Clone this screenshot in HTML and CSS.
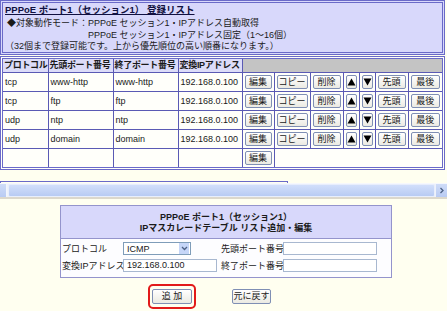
FILE: index.html
```html
<!DOCTYPE html>
<html lang="ja">
<head>
    <meta charset="UTF-8">
    <title>IPマスカレードテーブル</title>
    <link rel="stylesheet" href="styles.css">
</head>
<body>

    <!-- 上フレーム: 登録リスト -->
    <div class="top-frame">
        <div class="info-box">
            <div class="info-title">PPPoE ポート1（セッション1） 登録リスト</div>
            <div class="info-mode">
                <span class="mode-lbl">◆対象動作モード：</span>
                <span>PPPoE セッション1・IPアドレス自動取得</span>
                <span></span>
                <span>PPPoE セッション1・IPアドレス固定（1〜16個）</span>
            </div>
            <div class="info-note">（32個まで登録可能です。上から優先順位の高い順番になります。）</div>
        </div>

        <div class="table-wrap">
            <table class="list-table">
                <colgroup>
                    <col class="w-proto"><col class="w-port"><col class="w-port"><col class="w-ip">
                    <col class="w-edit"><col class="w-copy"><col class="w-del">
                    <col class="w-arrow"><col class="w-arrow"><col class="w-top"><col class="w-last">
                </colgroup>
                <thead>
                    <tr>
                        <th>プロトコル</th>
                        <th>先頭ポート番号</th>
                        <th>終了ポート番号</th>
                        <th>変換IPアドレス</th>
                        <th class="blank" colspan="7"></th>
                    </tr>
                </thead>
                <tbody>
                    <tr>
                        <td>tcp</td><td>www-http</td><td>www-http</td><td>192.168.0.100</td>
                        <td class="b"><button class="btn">編集</button></td>
                        <td class="b"><button class="btn">コピー</button></td>
                        <td class="b"><button class="btn">削除</button></td>
                        <td class="b"><button class="btn arrow"><svg width="9" height="8" viewBox="0 0 9 8"><path d="M4.5 0.5 L8.5 7.5 L0.5 7.5 Z"/></svg></button></td>
                        <td class="b"><button class="btn arrow"><svg width="9" height="8" viewBox="0 0 9 8"><path d="M0.5 0.5 L8.5 0.5 L4.5 7.5 Z"/></svg></button></td>
                        <td class="b"><button class="btn">先頭</button></td>
                        <td class="b"><button class="btn">最後</button></td>
                    </tr>
                    <tr>
                        <td>tcp</td><td>ftp</td><td>ftp</td><td>192.168.0.100</td>
                        <td class="b"><button class="btn">編集</button></td>
                        <td class="b"><button class="btn">コピー</button></td>
                        <td class="b"><button class="btn">削除</button></td>
                        <td class="b"><button class="btn arrow"><svg width="9" height="8" viewBox="0 0 9 8"><path d="M4.5 0.5 L8.5 7.5 L0.5 7.5 Z"/></svg></button></td>
                        <td class="b"><button class="btn arrow"><svg width="9" height="8" viewBox="0 0 9 8"><path d="M0.5 0.5 L8.5 0.5 L4.5 7.5 Z"/></svg></button></td>
                        <td class="b"><button class="btn">先頭</button></td>
                        <td class="b"><button class="btn">最後</button></td>
                    </tr>
                    <tr>
                        <td>udp</td><td>ntp</td><td>ntp</td><td>192.168.0.100</td>
                        <td class="b"><button class="btn">編集</button></td>
                        <td class="b"><button class="btn">コピー</button></td>
                        <td class="b"><button class="btn">削除</button></td>
                        <td class="b"><button class="btn arrow"><svg width="9" height="8" viewBox="0 0 9 8"><path d="M4.5 0.5 L8.5 7.5 L0.5 7.5 Z"/></svg></button></td>
                        <td class="b"><button class="btn arrow"><svg width="9" height="8" viewBox="0 0 9 8"><path d="M0.5 0.5 L8.5 0.5 L4.5 7.5 Z"/></svg></button></td>
                        <td class="b"><button class="btn">先頭</button></td>
                        <td class="b"><button class="btn">最後</button></td>
                    </tr>
                    <tr>
                        <td>udp</td><td>domain</td><td>domain</td><td>192.168.0.100</td>
                        <td class="b"><button class="btn">編集</button></td>
                        <td class="b"><button class="btn">コピー</button></td>
                        <td class="b"><button class="btn">削除</button></td>
                        <td class="b"><button class="btn arrow"><svg width="9" height="8" viewBox="0 0 9 8"><path d="M4.5 0.5 L8.5 7.5 L0.5 7.5 Z"/></svg></button></td>
                        <td class="b"><button class="btn arrow"><svg width="9" height="8" viewBox="0 0 9 8"><path d="M0.5 0.5 L8.5 0.5 L4.5 7.5 Z"/></svg></button></td>
                        <td class="b"><button class="btn">先頭</button></td>
                        <td class="b"><button class="btn">最後</button></td>
                    </tr>
                    <tr>
                        <td></td><td></td><td></td><td></td>
                        <td class="b"><button class="btn">編集</button></td>
                        <td colspan="6"></td>
                    </tr>
                </tbody>
            </table>
        </div>

        <div class="next-box"></div>
    </div>

    <!-- 横スクロールバー -->
    <div class="hscroll">
        <div class="hs-left"></div>
        <div class="hs-thumb"></div>
        <div class="hs-right">
            <svg width="6" height="7" viewBox="0 0 6 7"><path d="M1.5 1 L4 3.5 L1.5 6" fill="none" stroke="#4d6185" stroke-width="1.3"/></svg>
        </div>
    </div>
    <div class="frame-edge"></div>

    <!-- 下フレーム: 追加・編集 -->
    <div class="bottom-frame">
        <div class="edit-box">
            <div class="edit-head">
                PPPoE ポート1（セッション1）<br>
                IPマスカレードテーブル リスト追加・編集
            </div>
            <div class="edit-body">
                <span class="lbl">プロトコル</span>
                <span class="select">ICMP<span class="sel-btn">
                    <svg width="7" height="5" viewBox="0 0 7 5"><path d="M1 1 L3.5 3.5 L6 1" fill="none" stroke="#4d6185" stroke-width="1.3"/></svg>
                </span></span>
                <span class="lbl r">先頭ポート番号</span>
                <span class="input"></span>

                <span class="lbl">変換IPアドレス</span>
                <span class="input">192.168.0.100</span>
                <span class="lbl r">終了ポート番号</span>
                <span class="input"></span>
            </div>
        </div>

        <div class="actions">
            <span class="highlight"><button class="btn big">追 加</button></span>
            <button class="btn big">元に戻す</button>
        </div>
    </div>

</body>
</html>
```

FILE: styles.css
```css
body {
    margin: 0;
    background-color: #fffff0;
    font-family: "Liberation Sans", "Noto Sans CJK JP", sans-serif;
    font-size: 9px;
    color: #1a1a1a;
    width: 447px;
    height: 311px;
    overflow: hidden;
}

/* top frame */
.top-frame { height: 183px; overflow: hidden; }
.info-box {
    width: 437px;
    border: 3px double #6a6ac8;
    background-color: #d8d8fb;
    padding: 0 0 0 2px;
    line-height: 12px;
}
.info-title {
    font-size: 9.5px;
    font-weight: bold;
    text-decoration: underline;
    line-height: 14px;
    color: #101040;
}
.info-mode {
    display: grid;
    grid-template-columns: 81px auto;
    padding-left: 2px;
}
.info-note { line-height: 11px; }

.table-wrap {
    width: 439px;
    margin-top: 1px;
    border: 3px double #6a6ac8;
    background-color: #fffffa;
}
.list-table {
    width: 100%;
    table-layout: fixed;
    border-collapse: collapse;
    border-style: hidden;
}
.list-table th, .list-table td {
    border: 1px solid #5a5ab4;
    padding: 0 2px;
    text-align: left;
    white-space: nowrap;
    overflow: hidden;
    height: 18px;
}
.list-table th {
    background-color: #dcdcf8;
    font-weight: bold;
    height: 13px;
    line-height: 13px;
    padding: 0 1px;
    letter-spacing: -0.3px;
}
.list-table th.blank { background-color: #c4c4c4; }
.list-table td.b { padding: 0 2px; }
.w-proto { width: 45px; }
.w-port { width: 65px; }
.w-ip { width: 64px; }
.w-edit { width: 32px; }
.w-copy { width: 36px; }
.w-del { width: 33px; }
.w-arrow { width: 16px; }
.w-top { width: 33px; }
.w-last { width: 34px; }

.next-box {
    margin-top: 11px;
    width: 282px;
    height: 10px;
    border: 3px double #6a6ac8;
}

/* buttons */
.btn {
    font-family: "Liberation Sans", "Noto Sans CJK JP", sans-serif;
    font-size: 9px;
    color: #1a1a1a;
    width: 100%;
    height: 14px;
    line-height: 11px;
    padding: 0;
    border: 1px solid #7f8fb4;
    border-radius: 2px;
    background: linear-gradient(#ffffff, #ebeae2);
    cursor: pointer;
}
.btn.arrow { display: flex; align-items: center; justify-content: center; }
.btn.arrow svg { fill: #000; }

/* scrollbar */
.hscroll {
    height: 13px;
    display: flex;
    background-color: #eef2fb;
    border-top: 1px solid #f6f8fd;
}
.hs-left {
    width: 6px;
    background: linear-gradient(#cfdcf8, #b9cbf3);
    border-right: 1px solid #f2f5fc;
}
.hs-thumb {
    flex: 1;
    margin: 0 1px;
    background: linear-gradient(#d2dffb, #b8cbf3);
    border: 1px solid #e8eefc;
    border-radius: 2px;
}
.hs-right {
    width: 11px;
    display: flex;
    align-items: center;
    justify-content: center;
    background: linear-gradient(#cfdcf8, #b9cbf3);
}
.frame-edge { height: 2px; background-color: #dcd8cc; }

/* bottom frame */
.bottom-frame { padding-top: 6px; }
.edit-box {
    width: 330px;
    margin-left: 60px;
    border: 1px solid #9494cc;
}
.edit-head {
    background-color: #d8d8fb;
    text-align: center;
    font-weight: bold;
    line-height: 11px;
    padding: 6px 0 4px;
    border-bottom: 1px solid #9494cc;
}
.edit-body {
    display: grid;
    grid-template-columns: 61px 98px 62px 95px;
    align-items: center;
    row-gap: 4px;
    background-color: #fdfdff;
    padding: 3px 0 5px 1px;
    white-space: nowrap;
}
.lbl.r { text-align: right; padding-right: 2px; }
.select {
    display: flex;
    align-items: center;
    justify-content: space-between;
    width: 68px;
    height: 13px;
    padding: 0 1px 0 3px;
    border: 1px solid #7f9db9;
    background-color: #fff;
    box-sizing: border-box;
}
.sel-btn {
    display: flex;
    align-items: center;
    justify-content: center;
    width: 10px;
    height: 11px;
    background-color: #c6d6f8;
}
.input {
    width: 94px;
    height: 13px;
    border: 1px solid #a8b8d0;
    background-color: #fff;
    box-sizing: border-box;
    padding-left: 3px;
    line-height: 11px;
}

.actions {
    display: flex;
    align-items: center;
    margin-top: 6px;
    padding-left: 148px;
}
.highlight {
    display: inline-block;
    padding: 3px 2px;
    border: 2px solid #e21a1a;
    border-radius: 5px;
    margin-right: 36px;
}
.btn.big { display: block; width: 40px; height: 15px; }
.actions > .btn.big { display: inline-block; width: 39px; }
```
